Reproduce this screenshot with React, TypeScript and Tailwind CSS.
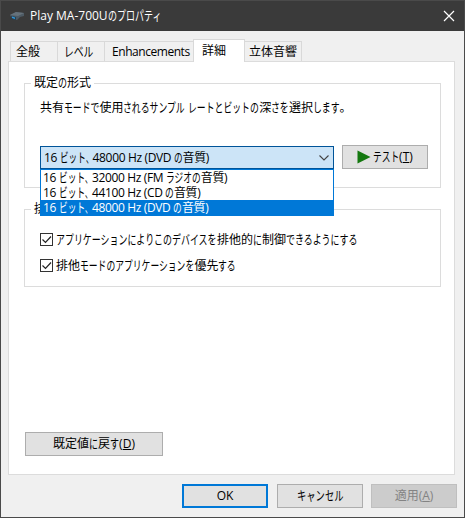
import React from "react";

type TextProps = {
  text: string;
  // advance of one kana in pixels, a kanji takes 12
  kana?: number;
  className?: string;
};

const KANA_SIZE = 13;
const COMMA_WIDTH = 7;

// UI Gothic look: full width kanji, narrow kana
const UiText: React.FC<TextProps> = ({ text, kana = 9, className = "" }) => {
  const runs = text.split(/([ぁ-んァ-ヶー]+|、)/).filter((run) => run !== "");

  return (
    <span className={`flex items-center h-4 whitespace-pre ${className}`}>
      {runs.map((run, idx) => {
        if (!/^[ぁ-んァ-ヶー、]/.test(run)) {
          return <span key={idx}>{run}</span>;
        }
        const advance = run === "、" ? COMMA_WIDTH : kana;
        return (
          <span
            key={idx}
            className="block shrink-0 h-4 -mt-[2px] text-[13px] leading-4 tracking-normal"
            style={{ width: run.length * advance }}
          >
            <span
              className="inline-block origin-left"
              style={{ transform: `scaleX(${advance / KANA_SIZE})` }}
            >
              {run}
            </span>
          </span>
        );
      })}
    </span>
  );
};

type GroupProps = {
  title: string;
  className: string;
  children: React.ReactNode;
};

const Group: React.FC<GroupProps> = ({ title, className, children }) => (
  <section className={`w-[417px] flex flex-col ${className}`}>
    <div className="h-[16px] shrink-0 flex items-end">
      <span className="w-[7px] h-[8px] border-t border-l border-[#dcdcdc]" />
      <UiText text={title} className="mx-[3px]" />
      <span className="flex-1 h-[8px] border-t border-r border-[#dcdcdc]" />
    </div>
    <div className="flex-1 border border-t-0 border-[#dcdcdc] pl-[15px]">
      {children}
    </div>
  </section>
);

const options = [
  { text: "16 ビット、32000 Hz (FM ラジオの音質)", active: false },
  { text: "16 ビット、44100 Hz (CD の音質)", active: false },
  { text: "16 ビット、48000 Hz (DVD の音質)", active: true },
];

const checks = [
  { text: "アプリケーションによりこのデバイスを排他的に制御できるようにする", kana: 8.95 },
  { text: "排他モードのアプリケーションを優先する", kana: 8.8 },
];

const App: React.FC = () => {
  return (
    <div className="w-[465px] h-[518px] flex flex-col border border-[#4a4a4a] bg-[#f0f0f0] text-black text-[12px] leading-4 font-['Open_Sans','Noto_Sans_CJK_JP',sans-serif] overflow-hidden">
      {/* Title bar */}
      <div className="h-[30px] shrink-0 bg-[#3a3a3a] flex items-center pl-[8px] pr-[9px] text-white">
        <svg width="16" height="16" viewBox="0 0 16 16">
          <path d="M1 7l6-3 8 1v3l-4 1-3 3-4-1-2-2z" fill="#4d5a64" />
          <path d="M1 7l6-3 8 1-6 3z" fill="#66727b" />
          <path d="M2 8l5 1v3l-4-1z" fill="#243f52" />
          <path d="M3 8.5l3 1v1.5l-3-1z" fill="#3098dd" />
        </svg>
        <UiText text="Play MA-700Uのプロパティ" className="ml-[5px]" />
        <svg className="ml-auto" width="12" height="12" viewBox="0 0 12 12">
          <path d="M1 1l10 10M11 1L1 11" stroke="#fff" strokeWidth="1.2" />
        </svg>
      </div>

      {/* Tabs */}
      <div className="h-[30px] shrink-0 flex items-end pl-[9px]">
        <div className="w-[47px] h-[20px] border-t border-l border-[#d9d9d9] pl-[5px] pt-[2px]">
          <UiText text="全般" />
        </div>
        <div className="w-[48px] h-[20px] border-t border-x border-[#d9d9d9] pl-[6px] pt-[2px]">
          <UiText text="レベル" kana={9.8} />
        </div>
        <div className="w-[88px] h-[20px] border-t border-[#d9d9d9] pl-[7px] pt-[2px]">
          <UiText text="Enhancements" className="tracking-[-0.45px]" />
        </div>
        <div className="relative z-10 w-[52px] h-[23px] -mb-px border border-b-0 border-[#d9d9d9] bg-white pl-[8px] pt-[3px]">
          <UiText text="詳細" />
        </div>
        <div className="w-[57px] h-[20px] border-t border-r border-[#d9d9d9] pl-[4px] pt-[2px]">
          <UiText text="立体音響" />
        </div>
      </div>

      {/* Tab page */}
      <div className="w-[447px] h-[414px] shrink-0 ml-[7px] border border-[#dcdcdc] bg-white pl-[15px] pt-[13px] flex flex-col items-start">
        <Group title="既定の形式" className="h-[113px]">
          <UiText
            text="共有モードで使用されるサンプル レートとビットの深さを選択します。"
            kana={8.85}
            className="mt-[9px]"
          />
          <div className="flex items-start mt-[29px]">
            <div className="relative w-[294px] h-[23px] mt-px border border-[#005499] bg-[#cce4f7] flex items-center pl-[3px] pr-[3px]">
              <UiText
                text="16 ビット、48000 Hz (DVD の音質)"
                kana={8.6}
                className="tracking-[-0.35px]"
              />
              <svg className="ml-auto" width="12" height="8" viewBox="0 0 12 8">
                <path d="M1.5 1.5l4.5 4.5 4.5-4.5" fill="none" stroke="#444" strokeWidth="1.1" />
              </svg>
              {/* Open list */}
              <div className="absolute z-20 -left-px top-[22px] w-[294px] h-[47px] border border-[#0078d7] bg-white">
                {options.map((option, idx) => (
                  <div
                    key={idx}
                    className={`h-[15px] pl-[2px] flex items-center ${
                      option.active ? "bg-[#0078d7] text-white" : ""
                    }`}
                  >
                    <UiText
                      text={option.text}
                      kana={8.7}
                      className="tracking-[-0.35px]"
                    />
                  </div>
                ))}
              </div>
            </div>
            <button className="w-[86px] h-[24px] ml-[8px] border border-[#adadad] bg-[#e1e1e1] flex items-center pl-[14px]">
              <svg width="14" height="14" viewBox="0 0 14 14">
                <path d="M.5.5l13 6.5-13 6.5z" fill="#14780f" />
              </svg>
              <span className="ml-[2px] flex items-center">
                <UiText text="テスト" kana={8.7} />(<u>T</u>)
              </span>
            </button>
          </div>
        </Group>

        <Group title="排他モード" className="h-[86px] mt-[13px]">
          <div className="flex flex-col gap-[10px] mt-[15px]">
            {checks.map((check, idx) => (
              <div key={idx} className="flex items-start h-[16px]">
                <svg className="mt-px" width="13" height="13" viewBox="0 0 13 13">
                  <rect x=".5" y=".5" width="12" height="12" fill="#fff" stroke="#333" />
                  <path d="M2.5 6.5l3 3 5.5-6" fill="none" stroke="#222" strokeWidth="1.2" />
                </svg>
                <UiText text={check.text} kana={check.kana} className="ml-[3px]" />
              </div>
            ))}
          </div>
        </Group>

        <button className="w-[138px] h-[24px] ml-px mt-[145px] border border-[#adadad] bg-[#e1e1e1] flex items-center justify-center">
          <UiText text="既定値に戻す" />(<u>D</u>)
        </button>
      </div>

      {/* Dialog buttons */}
      <div className="flex justify-end pr-[7px] mt-[9px]">
        <button className="w-[86px] h-[24px] border-2 border-[#0078d7] bg-[#e1e1e1]">
          OK
        </button>
        <button className="w-[86px] h-[24px] ml-[9px] border border-[#adadad] bg-[#e1e1e1] flex items-center justify-center">
          <UiText text="キャンセル" kana={9.3} />
        </button>
        <button className="w-[86px] h-[24px] ml-[8px] border border-[#bfbfbf] bg-[#cccccc] text-[#838383]">
          適用(<u>A</u>)
        </button>
      </div>
    </div>
  );
};

export default App;
